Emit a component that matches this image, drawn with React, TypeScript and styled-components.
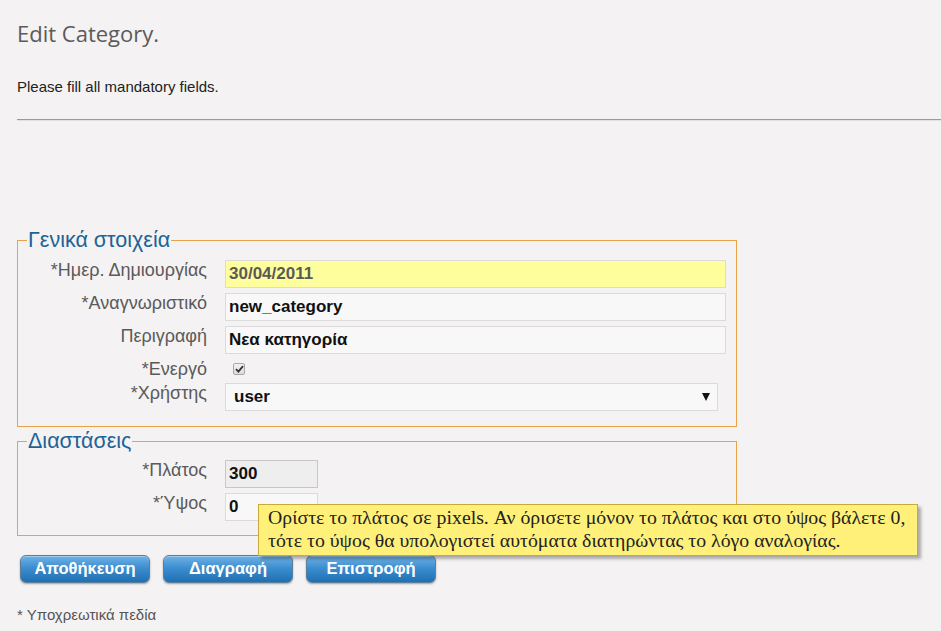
import styled, { createGlobalStyle } from "styled-components";

const GlobalStyle = createGlobalStyle`
  html, body {
    margin: 0;
    padding: 0;
    background: #f4f2f2;
  }
  body {
    font-family: "Liberation Sans", Arial, sans-serif;
    overflow: hidden;
  }
`;

const Page = styled.div`
  position: relative;
  width: 941px;
  height: 631px;
  padding: 0 0 0 17px;
  box-sizing: border-box;
  overflow: hidden;
`;

const Title = styled.h1`
  margin: 0;
  padding-top: 18px;
  font-family: "Open Sans", sans-serif;
  font-weight: 400;
  font-size: 22px;
  line-height: 30px;
  color: #5b5b5b;
`;

const Intro = styled.p`
  margin: 30px 0 0;
  font-size: 15px;
  line-height: 18px;
  color: #222;
`;

const Rule = styled.hr`
  margin: 23px 0 0;
  border: 0;
  height: 2px;
  background: linear-gradient(#9a9a9a 0 1px, #e2e0e0 1px 2px);
`;

const Fieldset = styled.fieldset<{ $top: number; $bottom: number }>`
  margin: ${({ $top }) => $top}px 0 0;
  width: 720px;
  box-sizing: border-box;
  padding: 0 10px ${({ $bottom }) => $bottom}px 0;
  border: 1px solid #e9a24a;
  border-radius: 0;
  min-width: 0;
`;

const Legend = styled.legend`
  margin-left: 9px;
  padding: 0 1px;
  font-size: 21.5px;
  line-height: 20px;
  color: #1d6396;
`;

const Rows = styled.div<{ $pad: number }>`
  display: grid;
  grid-template-columns: 189px 1fr;
  column-gap: 18px;
  row-gap: 5px;
  align-items: center;
  padding-top: ${({ $pad }) => $pad}px;
`;

const Label = styled.label`
  text-align: right;
  font-size: 18px;
  color: #5a5a5a;
  line-height: 18px;
  align-self: start;
  padding-top: 1px;
`;

const Input = styled.div<{ $bg?: string; $w?: number }>`
  box-sizing: border-box;
  height: 28px;
  width: ${({ $w }) => ($w ? `${$w}px` : "100%")};
  border: 1px solid #dcdada;
  background: ${({ $bg }) => $bg ?? "#f9f8f8"};
  padding: 0 7px 0 3px;
  display: flex;
  align-items: center;
  font-size: 17px;
  font-weight: 700;
  color: #111;
`;

const Select = styled(Input)`
  justify-content: space-between;
  padding-left: 8px;
  padding-right: 7px;
  width: 493px;
`;

const Arrow = styled.span`
  width: 0;
  height: 0;
  border-left: 4px solid transparent;
  border-right: 4px solid transparent;
  border-top: 8px solid #111;
`;

const CheckRow = styled.div`
  display: flex;
  align-items: center;
  padding-left: 8px;
`;

const Check = styled.span`
  box-sizing: border-box;
  width: 12px;
  height: 12px;
  border: 1px solid #a8a8a8;
  border-radius: 2px;
  background: linear-gradient(#f2f2f2, #dcdcdc);
  display: flex;
  align-items: center;
  justify-content: center;
`;

const Buttons = styled.div`
  display: flex;
  gap: 13px;
  margin: 19px 0 0 3px;
`;

const Button = styled.button`
  box-sizing: border-box;
  width: 130px;
  height: 28px;
  border-radius: 6px;
  border: 1px solid #5c7f9c;
  background: linear-gradient(#6fb3e6 0%, #3d8ed0 45%, #1f6fb4 100%);
  box-shadow: 0 1px 2px rgba(0, 0, 0, 0.35), inset 0 1px 0 rgba(255, 255, 255, 0.35);
  color: #fff;
  font-family: "Liberation Sans", Arial, sans-serif;
  font-weight: 700;
  font-size: 16.5px;
  padding: 0 0 2px;
`;

const Footnote = styled.p`
  margin: 23px 0 0;
  font-size: 15px;
  color: #555;
`;

const Tip = styled.div`
  position: absolute;
  left: 258px;
  top: 504px;
  width: 660px;
  height: 52px;
  box-sizing: border-box;
  background: #fff07a;
  border: 1px solid #c8a93a;
  box-shadow: 3px 3px 3px rgba(0, 0, 0, 0.3);
  padding: 1px 0 0 9px;
  font-family: "Liberation Serif", "Times New Roman", serif;
  font-size: 19.8px;
  line-height: 23px;
  color: #222;
  white-space: nowrap;
`;

export default function App() {
  return (
    <Page>
      <GlobalStyle />
      <Title>Edit Category.</Title>
      <Intro>Please fill all mandatory fields.</Intro>
      <Rule />

      <Fieldset $top={109} $bottom={15}>
        <Legend>Γενικά στοιχεία</Legend>
        <Rows $pad={10}>
          <Label>*Ημερ. Δημιουργίας</Label>
          <Input $bg="#fffe9d" style={{ color: "#5a5a5a" }}>30/04/2011</Input>
          <Label>*Αναγνωριστικό</Label>
          <Input>new_category</Input>
          <Label>Περιγραφή</Label>
          <Input>Νεα κατηγορία</Input>
          <Label>*Ενεργό</Label>
          <CheckRow>
            <Check>
              <svg width="9" height="8" viewBox="0 0 9 8">
                <path d="M1 4.2 L3.4 6.6 L8 1.2" fill="none" stroke="#333" strokeWidth="1.8" />
              </svg>
            </Check>
          </CheckRow>
          <Label>*Χρήστης</Label>
          <Select>
            <span>user</span>
            <Arrow />
          </Select>
        </Rows>
      </Fieldset>

      <Fieldset $top={4} $bottom={14}>
        <Legend>Διαστάσεις</Legend>
        <Rows $pad={9}>
          <Label>*Πλάτος</Label>
          <Input $w={93} $bg="#efeeee" style={{ borderColor: "#c8c6c6" }}>300</Input>
          <Label>*Ύψος</Label>
          <Input $w={93}>0</Input>
        </Rows>
      </Fieldset>

      <Buttons>
        <Button>Αποθήκευση</Button>
        <Button>Διαγραφή</Button>
        <Button>Επιστροφή</Button>
      </Buttons>

      <Footnote>* Υποχρεωτικά πεδία</Footnote>

      <Tip>
        Ορίστε το πλάτος σε pixels. Αν όρισετε μόνον το πλάτος και στο ύψος βάλετε 0,
        <br />
        τότε το ύψος θα υπολογιστεί αυτόματα διατηρώντας το λόγο αναλογίας.
      </Tip>
    </Page>
  );
}
